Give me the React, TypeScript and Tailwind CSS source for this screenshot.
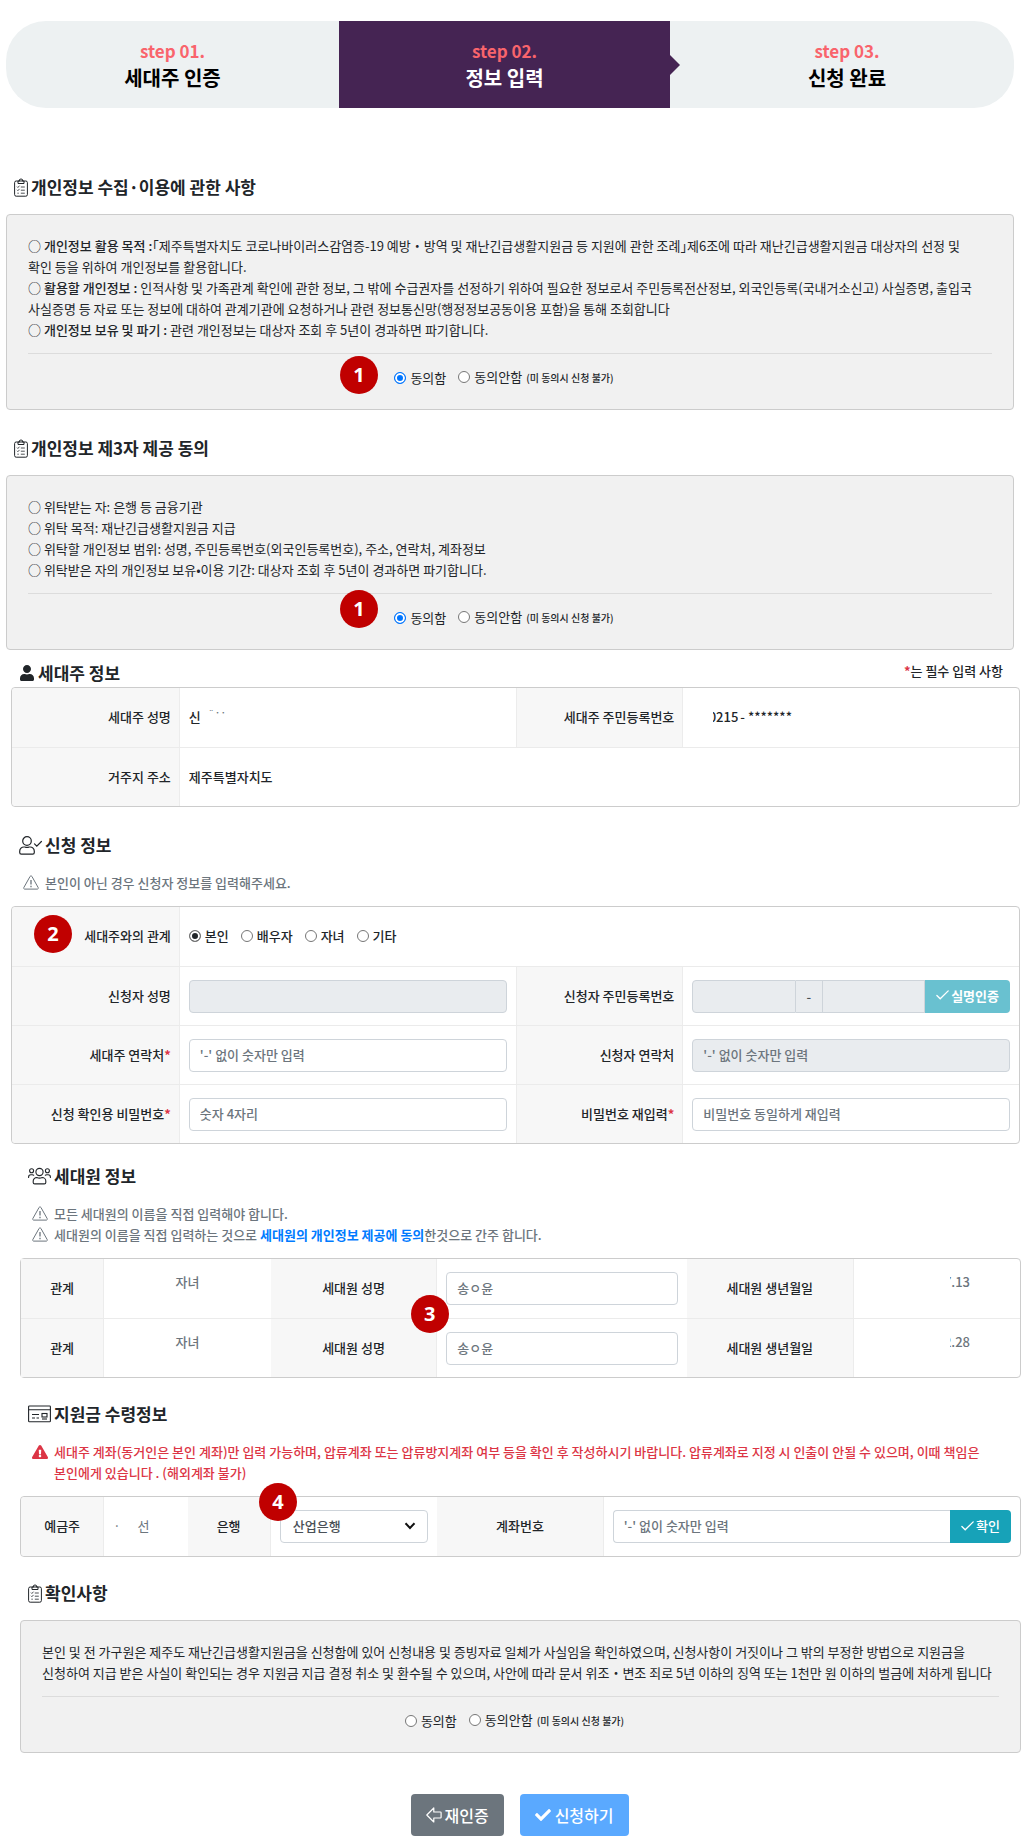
import React, { ReactNode } from "react";
import clsx from "clsx";
import { FaCheck, FaExclamationTriangle, FaUser } from "react-icons/fa";

/* ---------- icons ---------- */

function ClipboardIcon() {
    return (
        <svg viewBox="0 0 14 19" className="h-[19px] w-[14px] shrink-0" fill="none" stroke="currentColor" aria-hidden="true">
            <rect x="0.6" y="3" width="12.8" height="15.2" rx="1.6" />
            <path d="M4 3v2.5h6V3H8.4a1.5 1.5 0 1 0-2.8 0z" />
            <path d="M3 8.6l.9.9 1.6-1.8M3 11.8l.9.9 1.6-1.8M6.8 9h4M6.8 12.2h4M6.8 15.2h4M3.4 15.2h1.4" strokeWidth="0.8" />
        </svg>
    );
}

function UserCheckIcon() {
    return (
        <svg viewBox="0 0 23 19" className="h-[19px] w-[23px] shrink-0" fill="none" stroke="currentColor" strokeWidth="1.2" aria-hidden="true">
            <circle cx="8" cy="5" r="4.3" />
            <path d="M5 11h.8c1.4.6 3 .6 4.4 0h.8a4.2 4.2 0 0 1 4.3 4.2v1.4c0 .9-.7 1.6-1.6 1.6H2.3c-.9 0-1.6-.7-1.6-1.6v-1.4A4.2 4.2 0 0 1 5 11z" />
            <path d="M15.5 7.8l2.3 2.3 4.6-4.6" strokeLinecap="round" />
        </svg>
    );
}

function UsersIcon() {
    return (
        <svg viewBox="0 0 23 18" className="h-[18px] w-[23px] shrink-0" fill="none" stroke="currentColor" strokeWidth="1.1" strokeLinecap="round" aria-hidden="true">
            <circle cx="11.5" cy="5" r="3.6" />
            <circle cx="3.6" cy="3.8" r="2" />
            <circle cx="19.4" cy="3.8" r="2" />
            <path d="M8.8 10.5c1.7.8 3.7.8 5.4 0a3.6 3.6 0 0 1 3.6 3.6v1.3c0 .9-.6 1.5-1.5 1.5H6.7c-.9 0-1.5-.6-1.5-1.5v-1.3a3.6 3.6 0 0 1 3.6-3.6z" />
            <path d="M.6 10.5V10c0-1.2 1-2.2 2.2-2.2h1.5c.6 0 1 .1 1.4.4M22.4 10.5V10c0-1.2-1-2.2-2.2-2.2h-1.5c-.6 0-1 .1-1.4.4" />
        </svg>
    );
}

function BankbookIcon() {
    return (
        <svg viewBox="0 0 23 18" className="h-[18px] w-[23px] shrink-0" fill="none" stroke="currentColor" strokeWidth="1.1" aria-hidden="true">
            <rect x="0.6" y="1" width="21.8" height="15.8" rx="0.8" />
            <path d="M.6 4.8h21.8M4 9.5h7M4 13h3M8.5 13H11" />
            <rect x="14" y="8.5" width="5" height="3.5" />
            <path d="M14 14h5" />
        </svg>
    );
}

function WarningIcon() {
    return (
        <svg viewBox="0 0 16 15" className="h-[15px] w-4 shrink-0" fill="none" stroke="currentColor" strokeLinejoin="round" aria-hidden="true">
            <path d="M8 .9c.4 0 .7.2.9.5l6.3 11.2c.4.7-.1 1.5-.9 1.5H1.7c-.8 0-1.3-.8-.9-1.5L7.1 1.4c.2-.3.5-.5.9-.5z" />
            <path d="M8 5v4.5M8 10.8v1.5" strokeWidth="1.3" />
        </svg>
    );
}

function ThinCheckIcon() {
    return (
        <svg viewBox="0 0 13 10" className="h-[10px] w-[13px] shrink-0" fill="none" stroke="currentColor" strokeWidth="1.3" strokeLinecap="round" aria-hidden="true">
            <path d="M.9 5.5l3.3 3.3L12.2.9" />
        </svg>
    );
}

function ArrowLeftIcon() {
    return (
        <svg viewBox="0 0 16 16" className="size-4 shrink-0" fill="none" stroke="currentColor" strokeWidth="1.2" strokeLinejoin="round" aria-hidden="true">
            <path d="M.8 8l7-7v4h6.6c.4 0 .7.3.7.7v4.6c0 .4-.3.7-.7.7H7.8v4z" />
        </svg>
    );
}

function SelectArrowIcon() {
    return (
        <svg viewBox="0 0 12 8" className="pointer-events-none absolute top-3 right-3 h-2 w-3" fill="none" stroke="#111" strokeWidth="2" aria-hidden="true">
            <path d="M1.5 1.2L6 6l4.5-4.8" />
        </svg>
    );
}

/* ---------- shared pieces ---------- */

function SectionTitle({ icon, children }: { icon: ReactNode; children: ReactNode }) {
    return (
        <h2 className="flex items-center gap-[3px] pb-0.5 text-[17px] leading-6 font-bold">
            {icon}
            {children}
        </h2>
    );
}

function Badge({ value, className }: { value: number; className: string }) {
    return (
        <span
            className={clsx(
                "absolute z-10 flex size-[38px] items-center justify-center rounded-full bg-[#c00000] font-['Noto_Sans',sans-serif] text-xl font-bold text-white",
                className,
            )}
        >
            {value}
        </span>
    );
}

function Note({ icon, children }: { icon?: ReactNode; children: ReactNode }) {
    return (
        <p className="flex gap-[6px]">
            <span className="flex h-[21px] items-center">{icon ?? <WarningIcon />}</span>
            <span>{children}</span>
        </p>
    );
}

type RadioProps = {
    name: string;
    label: string;
    hint?: string;
    dark?: boolean;
    defaultChecked?: boolean;
};

function Radio({ name, label, hint, dark, defaultChecked }: RadioProps) {
    return (
        <label className="mr-3 inline-flex items-center gap-1">
            <input
                type="radio"
                name={name}
                defaultChecked={defaultChecked}
                className={clsx(
                    "size-3 appearance-none rounded-full border border-[#767676] bg-white",
                    dark
                        ? "checked:bg-[#212529] checked:shadow-[inset_0_0_0_2px_#fff]"
                        : "checked:border-[#0075ff] checked:bg-[#0075ff] checked:shadow-[inset_0_0_0_2px_#fff]",
                )}
            />
            <span>
                {label}
                {hint && <small className="ml-1 text-[10px] font-medium">{hint}</small>}
            </span>
        </label>
    );
}

type ConsentProps = {
    name: string;
    agreed?: boolean;
    badge?: ReactNode;
    children: ReactNode;
};

function ConsentBox({ name, agreed, badge, children }: ConsentProps) {
    return (
        <div className="mt-[13px] rounded border border-[#ccc] bg-[#f1f1f1] px-[21px] pt-5 pb-[21px] break-keep">
            {children}
            <div className="relative mt-[13px] flex h-[35px] items-end justify-center border-t border-[#dcdcdc]">
                {badge}
                <Radio name={name} label="동의함" defaultChecked={agreed} />
                <Radio name={name} label="동의안함" hint="(미 동의시 신청 불가)" />
            </div>
        </div>
    );
}

function Panel({ children }: { children: ReactNode }) {
    return <div className="relative rounded border border-[#ccc] bg-white font-medium">{children}</div>;
}

function Row({ className, children }: { className: string; children: ReactNode }) {
    return (
        <div className={clsx("grid h-[59px] border-t border-[#ebebeb] first-of-type:border-t-0", className)}>
            {children}
        </div>
    );
}

type LabelCellProps = {
    htmlFor?: string;
    required?: boolean;
    className?: string;
    children: ReactNode;
};

function LabelCell({ htmlFor, required, className, children }: LabelCellProps) {
    return (
        <div className={clsx("flex items-center border-r border-[#ececec] bg-[#f7f7f7] px-2 pb-0.5", className)}>
            <label htmlFor={htmlFor}>
                {children}
                {required && <span className="font-bold text-[#dc3545]">*</span>}
            </label>
        </div>
    );
}

function Cell({ className, children }: { className?: string; children: ReactNode }) {
    return <div className={clsx("flex min-w-0 items-center px-[9px]", className)}>{children}</div>;
}

const inputClass =
    "h-[33px] w-full min-w-0 rounded border border-[#ced4da] bg-white px-[10px] pb-0.5 font-medium text-[#6c757d] placeholder:text-[#6c757d] disabled:bg-[#e9ecef]";

const formRow = "grid-cols-[1fr_2fr_1fr_2fr]";

/* ---------- page ---------- */

function Steps() {
    return (
        <ol className="grid h-[87px] grid-cols-[333fr_331fr_344fr] text-center text-[20px] leading-[27px] font-bold text-black">
            <li className="flex flex-col justify-center rounded-l-[40px] bg-[#edf1f2] pb-0.5">
                <span className="text-[17px] text-[#f9646c]">step 01.</span>
                세대주 인증
            </li>
            <li className="flex flex-col justify-center bg-[#452453] pb-0.5 text-white" aria-current="step">
                <span className="text-[17px] text-[#f9646c]">step 02.</span>
                정보 입력
            </li>
            <li className="flex items-center rounded-r-[40px] bg-[#edf1f2]">
                <svg viewBox="0 0 10 20" className="h-5 w-[10px]" fill="#452453" aria-hidden="true">
                    <path d="M0 0l10 10L0 20z" />
                </svg>
                <span className="flex flex-1 flex-col pb-0.5">
                    <span className="text-[17px] text-[#f9646c]">step 03.</span>
                    신청 완료
                </span>
            </li>
        </ol>
    );
}

function Householder() {
    return (
        <section className="mt-[11px] pr-[10px] pl-[11px]">
            <div className="flex items-start justify-between pr-[17px] pl-2">
                <SectionTitle icon={<FaUser className="size-4" />}>세대주 정보</SectionTitle>
                <p className="leading-5 font-medium">
                    <span className="font-bold text-[#dc3545]">*</span>는 필수 입력 사항
                </p>
            </div>
            <Panel>
                <Row className={formRow}>
                    <LabelCell className="justify-end rounded-tl">세대주 성명</LabelCell>
                    <Cell className="pb-0.5">
                        신<span className="mb-2 ml-2 text-[8px] text-[#6c757d]">¨ ˙ ˙</span>
                    </Cell>
                    <LabelCell className="justify-end border-l">세대주 주민등록번호</LabelCell>
                    <Cell className="pb-0.5 pl-[30px]">
                        {/* leading digits stay hidden */}
                        <span className="flex w-[25px] justify-end overflow-hidden">0215</span>
                        <span className="ml-0.5">- *******</span>
                    </Cell>
                </Row>
                <Row className="grid-cols-[1fr_5fr]">
                    <LabelCell className="justify-end rounded-bl">거주지 주소</LabelCell>
                    <Cell className="pb-0.5">제주특별자치도</Cell>
                </Row>
            </Panel>
        </section>
    );
}

function Applicant() {
    return (
        <section className="mt-[26px] pr-[10px] pl-[11px]">
            <div className="pl-2">
                <SectionTitle icon={<UserCheckIcon />}>신청 정보</SectionTitle>
            </div>
            <div className="my-[13px] pl-3 font-medium text-[#6c757d]">
                <Note>본인이 아닌 경우 신청자 정보를 입력해주세요.</Note>
            </div>
            <Panel>
                <Badge value={2} className="top-2 left-[22px]" />
                <Row className="grid-cols-[1fr_5fr]">
                    <LabelCell className="justify-end rounded-tl">세대주와의 관계</LabelCell>
                    <Cell className="pb-0.5">
                        <Radio name="relation" label="본인" dark defaultChecked />
                        <Radio name="relation" label="배우자" dark />
                        <Radio name="relation" label="자녀" dark />
                        <Radio name="relation" label="기타" dark />
                    </Cell>
                </Row>
                <Row className={formRow}>
                    <LabelCell htmlFor="applicant-name" className="justify-end">신청자 성명</LabelCell>
                    <Cell>
                        <input id="applicant-name" className={inputClass} disabled />
                    </Cell>
                    <LabelCell htmlFor="applicant-id" className="justify-end border-l">신청자 주민등록번호</LabelCell>
                    <Cell>
                        <input id="applicant-id" className={clsx(inputClass, "rounded-r-none")} disabled />
                        <span className="flex h-[33px] w-[26px] shrink-0 items-center justify-center border-y border-[#ced4da] bg-[#e9ecef] text-[#495057]">
                            -
                        </span>
                        <input aria-label="주민등록번호 뒷자리" type="password" className={clsx(inputClass, "rounded-none")} disabled />
                        <button
                            type="button"
                            className="flex h-[33px] shrink-0 items-center gap-[2px] rounded-r bg-[#69c1d0] px-[11px] pb-0.5 font-bold text-white"
                        >
                            <ThinCheckIcon />
                            실명인증
                        </button>
                    </Cell>
                </Row>
                <Row className={formRow}>
                    <LabelCell htmlFor="householder-phone" required className="justify-end">세대주 연락처</LabelCell>
                    <Cell>
                        <input id="householder-phone" className={inputClass} placeholder="'-' 없이 숫자만 입력" />
                    </Cell>
                    <LabelCell htmlFor="applicant-phone" className="justify-end border-l">신청자 연락처</LabelCell>
                    <Cell>
                        <input id="applicant-phone" className={inputClass} placeholder="'-' 없이 숫자만 입력" disabled />
                    </Cell>
                </Row>
                <Row className={formRow}>
                    <LabelCell htmlFor="pin" required className="justify-end rounded-bl">신청 확인용 비밀번호</LabelCell>
                    <Cell>
                        <input id="pin" type="password" className={inputClass} placeholder="숫자 4자리" />
                    </Cell>
                    <LabelCell htmlFor="pin-confirm" required className="justify-end border-l">비밀번호 재입력</LabelCell>
                    <Cell>
                        <input id="pin-confirm" type="password" className={inputClass} placeholder="비밀번호 동일하게 재입력" />
                    </Cell>
                </Row>
            </Panel>
        </section>
    );
}

const members = [
    { relation: "자녀", name: "송ㅇ윤", birth: "7.13" },
    { relation: "자녀", name: "송ㅇ윤", birth: "2.28" },
];

function Members() {
    return (
        <section className="mt-5 pr-[9px] pl-5">
            <div className="pl-2">
                <SectionTitle icon={<UsersIcon />}>세대원 정보</SectionTitle>
            </div>
            <div className="my-[13px] pl-3 font-medium text-[#6c757d]">
                <Note>모든 세대원의 이름을 직접 입력해야 합니다.</Note>
                <Note>
                    세대원의 이름을 직접 입력하는 것으로{" "}
                    <strong className="font-bold text-[#007bff]">세대원의 개인정보 제공에 동의</strong>한것으로 간주 합니다.
                </Note>
            </div>
            <Panel>
                <Badge value={3} className="top-9 left-[39%]" />
                {members.map((member, i) => (
                    <Row key={i} className="grid-cols-12">
                        <LabelCell className="justify-center">관계</LabelCell>
                        <Cell className="col-span-2 justify-center pb-[14px] text-[#6c757d]">{member.relation}</Cell>
                        <LabelCell htmlFor={`member-${i}`} className="col-span-2 justify-center">세대원 성명</LabelCell>
                        <Cell className="col-span-3">
                            <input id={`member-${i}`} className={inputClass} defaultValue={member.name} />
                        </Cell>
                        <LabelCell className="col-span-2 justify-center">세대원 생년월일</LabelCell>
                        <Cell className="col-span-2 justify-end pr-[50px] pb-[14px] text-[#6c757d]">
                            <span className="flex w-5 justify-end overflow-hidden">{member.birth}</span>
                        </Cell>
                    </Row>
                ))}
            </Panel>
        </section>
    );
}

function Payment() {
    return (
        <section className="mt-6 pr-[9px] pl-5">
            <div className="pl-2">
                <SectionTitle icon={<BankbookIcon />}>지원금 수령정보</SectionTitle>
            </div>
            <div className="my-[13px] pr-8 pl-3 font-medium break-keep text-[#dc3545]">
                <Note icon={<FaExclamationTriangle className="size-4" />}>
                    세대주 계좌(동거인은 본인 계좌)만 입력 가능하며, 압류계좌 또는 압류방지계좌 여부 등을 확인 후 작성하시기
                    바랍니다. 압류계좌로 지정 시 인출이 안될 수 있으며, 이때 책임은 본인에게 있습니다 . (해외계좌 불가)
                </Note>
            </div>
            <Panel>
                <Badge value={4} className="-top-[14px] left-[238px]" />
                <Row className="grid-cols-12">
                    <LabelCell className="justify-center rounded-l">예금주</LabelCell>
                    <Cell className="justify-between pr-[38px] pb-0.5 font-normal text-[#6c757d]">
                        <span>·</span>
                        <span>선</span>
                    </Cell>
                    <LabelCell htmlFor="bank" className="justify-center">은행</LabelCell>
                    <Cell className="col-span-2">
                        <div className="relative w-full">
                            <select
                                id="bank"
                                defaultValue="산업은행"
                                className="h-[33px] w-full appearance-none rounded border border-[#ced4da] bg-white px-3 pb-0.5 text-[#495057]"
                            >
                                <option>산업은행</option>
                            </select>
                            <SelectArrowIcon />
                        </div>
                    </Cell>
                    <LabelCell htmlFor="account" className="col-span-2 justify-center">계좌번호</LabelCell>
                    <Cell className="col-span-5">
                        <input
                            id="account"
                            className={clsx(inputClass, "rounded-r-none border-r-0")}
                            placeholder="'-' 없이 숫자만 입력"
                        />
                        <button
                            type="button"
                            className="flex h-[33px] shrink-0 items-center gap-[2px] rounded-r bg-[#17a2b8] px-[11px] pb-0.5 font-medium text-white"
                        >
                            <ThinCheckIcon />
                            확인
                        </button>
                    </Cell>
                </Row>
            </Panel>
        </section>
    );
}

export default function App() {
    return (
        <main className="bg-white pt-[21px] pb-2 font-['Noto_Sans_CJK_KR','Noto_Sans',sans-serif] text-[13px] leading-[21px] text-[#212529]">
            <div className="pr-4 pl-[6px]">
                <Steps />

                <section className="mt-[67px]">
                    <div className="pl-2">
                        <SectionTitle icon={<ClipboardIcon />}>개인정보 수집·이용에 관한 사항</SectionTitle>
                    </div>
                    <ConsentBox
                        name="collect"
                        agreed
                        badge={<Badge value={1} className="top-[2px] left-1/2 -ml-[170px]" />}
                    >
                        <p>
                            ○ <b className="font-medium">개인정보 활용 목적 :</b>
                            <span className="[font-feature-settings:'halt']">「</span>제주특별자치도 코로나바이러스감염증-19
                            예방・방역 및 재난긴급생활지원금 등 지원에 관한 조례
                            <span className="[font-feature-settings:'halt']">」</span>제6조에 따라 재난긴급생활지원금 대상자의
                            선정 및 확인&nbsp;등을 위하여 개인정보를 활용합니다.
                        </p>
                        <p>
                            ○ <b className="font-medium">활용할 개인정보 :</b> 인적사항 및 가족관계 확인에 관한 정보, 그 밖에
                            수급권자를 선정하기 위하여 필요한 정보로서 주민등록전산정보, 외국인등록(국내거소신고) 사실증명, 출입국
                            사실증명 등 자료 또는 정보에 대하여 관계기관에 요청하거나 관련 정보통신망(행정정보공동이용 포함)을 통해
                            조회합니다
                        </p>
                        <p>
                            ○ <b className="font-medium">개인정보 보유 및 파기 :</b> 관련 개인정보는 대상자 조회 후 5년이
                            경과하면 파기합니다.
                        </p>
                    </ConsentBox>
                </section>

                <section className="mt-[26px]">
                    <div className="pl-2">
                        <SectionTitle icon={<ClipboardIcon />}>개인정보 제3자 제공 동의</SectionTitle>
                    </div>
                    <ConsentBox
                        name="provide"
                        agreed
                        badge={<Badge value={1} className="-top-[4px] left-1/2 -ml-[170px]" />}
                    >
                        <p>○ 위탁받는 자: 은행 등 금융기관</p>
                        <p>○ 위탁 목적: 재난긴급생활지원금 지급</p>
                        <p>○ 위탁할 개인정보 범위: 성명, 주민등록번호(외국인등록번호), 주소, 연락처, 계좌정보</p>
                        <p>○ 위탁받은 자의 개인정보 보유•이용 기간: 대상자 조회 후 5년이 경과하면 파기합니다.</p>
                    </ConsentBox>
                </section>
            </div>

            <Householder />
            <Applicant />
            <Members />
            <Payment />

            <section className="mt-6 pr-[9px] pl-5">
                <div className="pl-2">
                    <SectionTitle icon={<ClipboardIcon />}>확인사항</SectionTitle>
                </div>
                <ConsentBox name="confirm">
                    <p>
                        본인 및 전 가구원은 제주도 재난긴급생활지원금을 신청함에 있어 신청내용 및 증빙자료 일체가 사실임을
                        확인하였으며, 신청사항이 거짓이나 그 밖의 부정한 방법으로 지원금을 신청하여 지급 받은 사실이 확인되는 경우
                        지원금 지급 결정 취소 및 환수될 수 있으며, 사안에 따라 문서 위조・변조 죄로 5년 이하의 징역 또는 1천만 원
                        이하의 벌금에 처하게 됩니다
                    </p>
                </ConsentBox>
            </section>

            <div className="mt-[41px] flex justify-center gap-4 pl-[10px] text-base font-medium text-white">
                <button type="button" className="flex h-[42px] items-center gap-[2px] rounded bg-[#6c757d] px-[15px]">
                    <ArrowLeftIcon />
                    재인증
                </button>
                <button type="submit" className="flex h-[42px] items-center gap-1 rounded bg-[#5aa9ff] px-[15px]">
                    <FaCheck className="size-4" />
                    신청하기
                </button>
            </div>
        </main>
    );
}
